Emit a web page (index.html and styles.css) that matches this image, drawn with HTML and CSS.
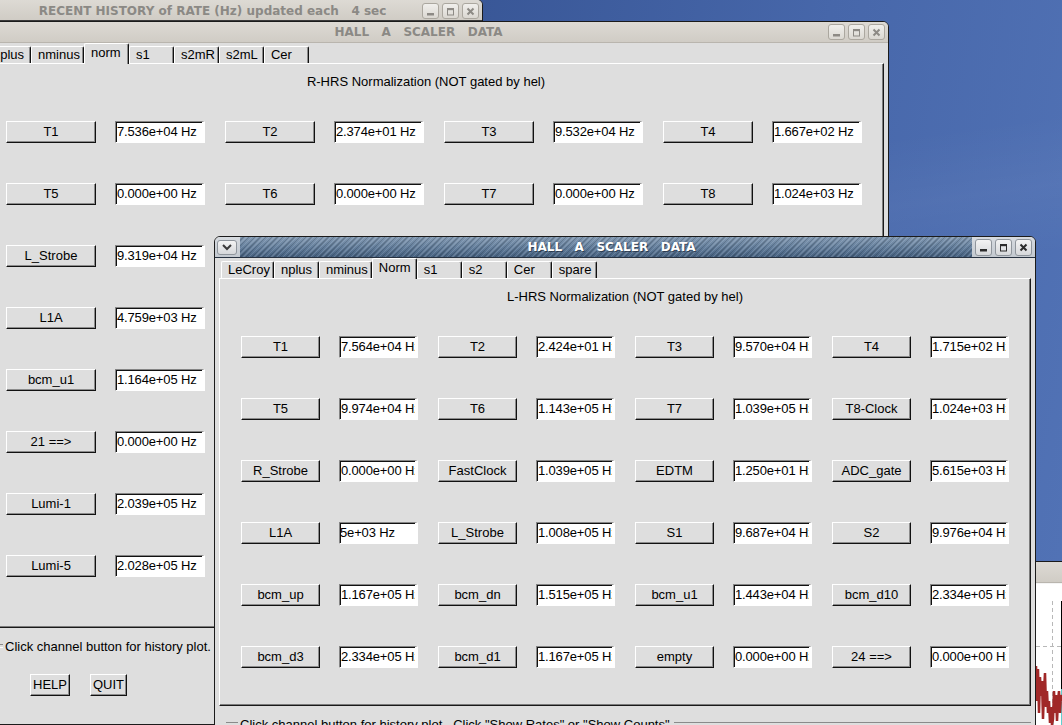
FILE: index.html
```html
<!DOCTYPE html>
<html>
<head>
<meta charset="utf-8">
<title>Hall A Scaler Data</title>
<link rel="stylesheet" href="styles.css">
</head>
<body>
<div class="desktop">

  <!-- Window A: recent history -->
  <div class="win win-a">
    <div class="titlebar">
      <div class="title">RECENT HISTORY of RATE (Hz) updated each   4 sec</div>
      <div class="wbtns">
        <span class="wbtn"><svg viewBox="0 0 11 11"><rect x="2" y="7" width="7" height="2.5" fill="currentColor"/></svg></span>
        <span class="wbtn"><svg viewBox="0 0 11 11"><rect x="2.5" y="2.5" width="6" height="6.5" fill="none" stroke="currentColor" stroke-width="1"/><rect x="2" y="2" width="7" height="2.2" fill="currentColor"/></svg></span>
        <span class="wbtn"><svg viewBox="0 0 11 11"><path d="M2.5 2.5 L8.5 8.5 M8.5 2.5 L2.5 8.5" stroke="currentColor" stroke-width="2"/></svg></span>
      </div>
    </div>
    <div class="body"></div>
  </div>

  <!-- Window B: R-HRS -->
  <div class="win win-b">
    <div class="titlebar">
      <div class="title">HALL   A   SCALER   DATA</div>
      <div class="wbtns">
        <span class="wbtn"><svg viewBox="0 0 11 11"><rect x="2" y="7" width="7" height="2.5" fill="currentColor"/></svg></span>
        <span class="wbtn"><svg viewBox="0 0 11 11"><rect x="2.5" y="2.5" width="6" height="6.5" fill="none" stroke="currentColor" stroke-width="1"/><rect x="2" y="2" width="7" height="2.2" fill="currentColor"/></svg></span>
        <span class="wbtn"><svg viewBox="0 0 11 11"><path d="M2.5 2.5 L8.5 8.5 M8.5 2.5 L2.5 8.5" stroke="currentColor" stroke-width="2"/></svg></span>
      </div>
    </div>
    <div class="body">
      <div class="tabs">
        <span class="tab">nplus</span>
        <span class="tab">nminus</span>
        <span class="tab sel">norm</span>
        <span class="tab">s1</span>
        <span class="tab">s2mR</span>
        <span class="tab">s2mL</span>
        <span class="tab">Cer</span>
      </div>
      <div class="panel">
        <div class="heading">R-HRS Normalization (NOT gated by hel)</div>
        <div class="grid">
          <div class="row">
            <div class="pair"><span class="btn">T1</span><span class="entry">7.536e+04 Hz</span></div>
            <div class="pair"><span class="btn">T2</span><span class="entry">2.374e+01 Hz</span></div>
            <div class="pair"><span class="btn">T3</span><span class="entry">9.532e+04 Hz</span></div>
            <div class="pair"><span class="btn">T4</span><span class="entry">1.667e+02 Hz</span></div>
          </div>
          <div class="row">
            <div class="pair"><span class="btn">T5</span><span class="entry">0.000e+00 Hz</span></div>
            <div class="pair"><span class="btn">T6</span><span class="entry">0.000e+00 Hz</span></div>
            <div class="pair"><span class="btn">T7</span><span class="entry">0.000e+00 Hz</span></div>
            <div class="pair"><span class="btn">T8</span><span class="entry">1.024e+03 Hz</span></div>
          </div>
          <div class="row">
            <div class="pair"><span class="btn">L_Strobe</span><span class="entry">9.319e+04 Hz</span></div>
            <div class="pair"><span class="btn">FastClock</span><span class="entry">1.039e+05 Hz</span></div>
            <div class="pair"><span class="btn">EDTM</span><span class="entry">1.250e+01 Hz</span></div>
            <div class="pair"><span class="btn">ADC_gate</span><span class="entry">5.615e+03 Hz</span></div>
          </div>
          <div class="row">
            <div class="pair"><span class="btn">L1A</span><span class="entry">4.759e+03 Hz</span></div>
            <div class="pair"><span class="btn">R_Strobe</span><span class="entry">1.008e+05 Hz</span></div>
            <div class="pair"><span class="btn">S1</span><span class="entry">9.687e+04 Hz</span></div>
            <div class="pair"><span class="btn">S2</span><span class="entry">9.976e+04 Hz</span></div>
          </div>
          <div class="row">
            <div class="pair"><span class="btn">bcm_u1</span><span class="entry">1.164e+05 Hz</span></div>
            <div class="pair"><span class="btn">bcm_d1</span><span class="entry">1.515e+05 Hz</span></div>
            <div class="pair"><span class="btn">bcm_u3</span><span class="entry">1.443e+04 Hz</span></div>
            <div class="pair"><span class="btn">bcm_d3</span><span class="entry">2.334e+05 Hz</span></div>
          </div>
          <div class="row">
            <div class="pair"><span class="btn">21 ==&gt;</span><span class="entry">0.000e+00 Hz</span></div>
            <div class="pair"><span class="btn">bcm_u10</span><span class="entry">1.167e+05 Hz</span></div>
            <div class="pair"><span class="btn">bcm_d10</span><span class="entry">2.334e+05 Hz</span></div>
            <div class="pair"><span class="btn">Lumi-0</span><span class="entry">2.041e+05 Hz</span></div>
          </div>
          <div class="row">
            <div class="pair"><span class="btn">Lumi-1</span><span class="entry">2.039e+05 Hz</span></div>
            <div class="pair"><span class="btn">Lumi-2</span><span class="entry">2.035e+05 Hz</span></div>
            <div class="pair"><span class="btn">Lumi-3</span><span class="entry">2.031e+05 Hz</span></div>
            <div class="pair"><span class="btn">Lumi-4</span><span class="entry">2.030e+05 Hz</span></div>
          </div>
          <div class="row">
            <div class="pair"><span class="btn">Lumi-5</span><span class="entry">2.028e+05 Hz</span></div>
            <div class="pair"><span class="btn">Lumi-6</span><span class="entry">2.026e+05 Hz</span></div>
            <div class="pair"><span class="btn">Lumi-7</span><span class="entry">2.025e+05 Hz</span></div>
            <div class="pair"><span class="btn">empty</span><span class="entry">0.000e+00 Hz</span></div>
          </div>
        </div>
      </div>
      <div class="lframe">
        <div class="legend"><span>Click channel button for history plot.</span></div>
        <div class="actions">
          <span class="btn abtn">HELP</span>
          <span class="btn abtn">QUIT</span>
        </div>
      </div>
    </div>
  </div>

  <!-- Window D: plot (partly hidden) -->
  <div class="win win-d">
    <div class="titlebar"></div>
    <div class="plot">
      <svg class="plotsvg" viewBox="0 0 198 180" width="198" height="180">
        <line x1="51.5" y1="17" x2="51.5" y2="180" stroke="#b8b8b8" stroke-width="1" stroke-dasharray="4 3"/>
        <line x1="0" y1="62.5" x2="198" y2="62.5" stroke="#b8b8b8" stroke-width="1" stroke-dasharray="4 3"/>
        <line x1="60.5" y1="17" x2="60.5" y2="180" stroke="#000" stroke-width="1"/>
        <line x1="51.5" y1="130" x2="51.5" y2="180" stroke="#5fd0d0" stroke-width="2"/>
        <line x1="61" y1="105" x2="61" y2="180" stroke="#5fd0d0" stroke-width="2"/>
        <polyline fill="none" stroke="#a02828" stroke-width="2.5" points="35,82 36,117 37,85 38,129 39,93 40,112 41,97 42,135 43,107 44,89 45,123 46,107 47,129 48,117 49,139 50,123 51,141 52,135 53,107 54,129 55,111 56,137 57,117 58,107 59,129 60,111 61,117"/>
      </svg>
    </div>
  </div>

  <!-- Window C: L-HRS (active) -->
  <div class="win win-c">
    <div class="titlebar active">
      <span class="menubtn"><svg viewBox="0 0 18 12"><path d="M5 4 L9 8 L13 4" fill="none" stroke="currentColor" stroke-width="2"/></svg></span>
      <div class="title">HALL   A   SCALER   DATA</div>
      <div class="wbtns">
        <span class="wbtn"><svg viewBox="0 0 11 11"><rect x="2" y="7" width="7" height="2.5" fill="currentColor"/></svg></span>
        <span class="wbtn"><svg viewBox="0 0 11 11"><rect x="2.5" y="2.5" width="6" height="6.5" fill="none" stroke="currentColor" stroke-width="1"/><rect x="2" y="2" width="7" height="2.2" fill="currentColor"/></svg></span>
        <span class="wbtn"><svg viewBox="0 0 11 11"><path d="M2.5 2.5 L8.5 8.5 M8.5 2.5 L2.5 8.5" stroke="currentColor" stroke-width="2"/></svg></span>
      </div>
    </div>
    <div class="body">
      <div class="tabs">
        <span class="tab">LeCroy</span>
        <span class="tab">nplus</span>
        <span class="tab">nminus</span>
        <span class="tab sel">Norm</span>
        <span class="tab">s1</span>
        <span class="tab">s2</span>
        <span class="tab">Cer</span>
        <span class="tab">spare</span>
      </div>
      <div class="panel">
        <div class="heading">L-HRS Normalization (NOT gated by hel)</div>
        <div class="grid">
          <div class="row">
            <div class="pair"><span class="btn">T1</span><span class="entry">7.564e+04 Hz</span></div>
            <div class="pair"><span class="btn">T2</span><span class="entry">2.424e+01 Hz</span></div>
            <div class="pair"><span class="btn">T3</span><span class="entry">9.570e+04 Hz</span></div>
            <div class="pair"><span class="btn">T4</span><span class="entry">1.715e+02 Hz</span></div>
          </div>
          <div class="row">
            <div class="pair"><span class="btn">T5</span><span class="entry">9.974e+04 Hz</span></div>
            <div class="pair"><span class="btn">T6</span><span class="entry">1.143e+05 Hz</span></div>
            <div class="pair"><span class="btn">T7</span><span class="entry">1.039e+05 Hz</span></div>
            <div class="pair"><span class="btn">T8-Clock</span><span class="entry">1.024e+03 Hz</span></div>
          </div>
          <div class="row">
            <div class="pair"><span class="btn">R_Strobe</span><span class="entry">0.000e+00 Hz</span></div>
            <div class="pair"><span class="btn">FastClock</span><span class="entry">1.039e+05 Hz</span></div>
            <div class="pair"><span class="btn">EDTM</span><span class="entry">1.250e+01 Hz</span></div>
            <div class="pair"><span class="btn">ADC_gate</span><span class="entry">5.615e+03 Hz</span></div>
          </div>
          <div class="row">
            <div class="pair"><span class="btn">L1A</span><span class="entry scrolled">5e+03 Hz</span></div>
            <div class="pair"><span class="btn">L_Strobe</span><span class="entry">1.008e+05 Hz</span></div>
            <div class="pair"><span class="btn">S1</span><span class="entry">9.687e+04 Hz</span></div>
            <div class="pair"><span class="btn">S2</span><span class="entry">9.976e+04 Hz</span></div>
          </div>
          <div class="row">
            <div class="pair"><span class="btn">bcm_up</span><span class="entry">1.167e+05 Hz</span></div>
            <div class="pair"><span class="btn">bcm_dn</span><span class="entry">1.515e+05 Hz</span></div>
            <div class="pair"><span class="btn">bcm_u1</span><span class="entry">1.443e+04 Hz</span></div>
            <div class="pair"><span class="btn">bcm_d10</span><span class="entry">2.334e+05 Hz</span></div>
          </div>
          <div class="row">
            <div class="pair"><span class="btn">bcm_d3</span><span class="entry">2.334e+05 Hz</span></div>
            <div class="pair"><span class="btn">bcm_d1</span><span class="entry">1.167e+05 Hz</span></div>
            <div class="pair"><span class="btn">empty</span><span class="entry">0.000e+00 Hz</span></div>
            <div class="pair"><span class="btn">24 ==&gt;</span><span class="entry">0.000e+00 Hz</span></div>
          </div>
        </div>
      </div>
      <div class="lframe">
        <div class="legend"><span>Click channel button for history plot.  Click "Show Rates" or "Show Counts"</span></div>
      </div>
    </div>
  </div>

</div>
</body>
</html>
```

FILE: styles.css
```css
* { box-sizing: border-box; }

body {
  margin: 0;
  background: #3d5b9b;
  font-family: "Liberation Sans", Arial, sans-serif;
  font-size: 13px;
  color: #000;
}

.desktop {
  position: relative;
  width: 1062px;
  height: 725px;
  overflow: hidden;
  background:
    linear-gradient(172deg, rgba(255,255,255,0) 30%, rgba(255,255,255,0.04) 38%, rgba(255,255,255,0) 46%),
    linear-gradient(100deg, #2f4b88 0%, #395797 40%, #4767aa 70%, #5273b6 100%);
}

/* ---------- windows ---------- */
.win {
  position: absolute;
  border: 1px solid #1b1b1b;
  border-radius: 6px 6px 0 0;
  background: #dedede;
  display: flex;
  flex-direction: column;
  overflow: hidden;
}

.win-a { left: -21px; top: -1px; width: 504px; height: 300px; }
.win-b { left: -21px; top: 21px; width: 910px; height: 704px; }
.win-c { left: 214px; top: 236px; width: 822px; height: 520px; }
.win-d { left: 1000px; top: 561px; width: 200px; height: 200px; }

.titlebar {
  flex: none;
  height: 21px;
  display: flex;
  align-items: center;
  background: linear-gradient(#dddad4, #d0ccc5);
  border-bottom: 1px solid #b9b5ae;
}

.win-a .titlebar {
  border-bottom-color: #3a3a3a;
  padding-top: 2px;
}

.title {
  flex: 1;
  text-align: center;
  font-family: "DejaVu Sans", sans-serif;
  font-weight: bold;
  font-size: 12px;
  color: #8b8985;
  white-space: pre;
  overflow: hidden;
}

.win-a .title { padding-left: 26px; }
.win-b .title { padding-left: 32px; }

.wbtns {
  display: flex;
  gap: 3px;
  padding: 0 3px;
}

.wbtn {
  width: 17px;
  height: 16px;
  border: 1px solid #aba79f;
  border-radius: 3px;
  background: linear-gradient(#f0efec, #dbd8d2);
  color: #8d8a85;
  display: flex;
  align-items: center;
  justify-content: center;
}

.wbtn svg { width: 11px; height: 11px; }

/* active title bar */
.titlebar.active {
  background: linear-gradient(#d7dbe0, #c3c9d0);
  border-bottom: 1px solid #263140;
}

.titlebar.active .title {
  align-self: stretch;
  display: flex;
  align-items: center;
  justify-content: center;
  padding-left: 11px;
  color: #fff;
  text-shadow: 1px 1px 0 rgba(20, 30, 45, 0.6);
  background:
    repeating-linear-gradient(135deg, rgba(255,255,255,0.14) 0 1px, rgba(255,255,255,0) 1px 2px, rgba(0,0,0,0.16) 2px 3px, rgba(0,0,0,0) 3px 4px),
    linear-gradient(#8299b2, #617c9a 55%, #45607f);
}

.titlebar.active .wbtn {
  height: 17px;
  color: #2c2c2c;
  border-color: #8f959c;
  background: linear-gradient(#f3f3f3, #d6d8db);
}

.menubtn {
  flex: none;
  width: 20px;
  height: 15px;
  margin: 0 3px 0 2px;
  border: 1px solid #8f959c;
  border-radius: 3px;
  background: linear-gradient(#f3f3f3, #d6d8db);
  color: #3a3a3a;
  display: flex;
  align-items: center;
  justify-content: center;
}

.menubtn svg { width: 18px; height: 12px; }

/* ---------- body ---------- */
.body {
  flex: 1;
  padding: 0 4px;
  display: flex;
  flex-direction: column;
}

.tabs {
  flex: none;
  height: 20px;
  display: flex;
  align-items: flex-end;
  padding-left: 2px;
  position: relative;
  z-index: 1;
}

.tab {
  height: 17px;
  min-width: 45px;
  padding: 0 3px 0 6px;
  line-height: 16px;
  border-top: 1px solid #fff;
  border-left: 1px solid #fff;
  border-right: 1px solid #111;
  box-shadow: inset -1px 0 0 #8a8a8a;
  border-radius: 2px 2px 0 0;
  background: #dedede;
  white-space: nowrap;
}

.tab.sel {
  height: 21px;
  margin-bottom: -1px;
  line-height: 18px;
}

.panel {
  flex: none;
  border-top: 1px solid #fff;
  border-left: 1px solid #fff;
  border-right: 1px solid #1a1a1a;
  border-bottom: 1px solid #1a1a1a;
  box-shadow: inset -1px -1px 0 #7c7c7c;
  padding-top: 9px;
}

.win-b .panel { height: 565px; }
.win-c .panel { height: 428px; }

.heading {
  height: 18px;
  line-height: 18px;
  text-align: center;
  margin-bottom: 30px;
  white-space: nowrap;
}

.win-b .heading { padding-right: 16px; }

.grid {
  margin-left: 21px;
  display: flex;
  flex-direction: column;
  gap: 40px;
}

.row { display: flex; gap: 20px; }
.pair { display: flex; gap: 19px; }

.btn {
  height: 22px;
  line-height: 20px;
  text-align: center;
  white-space: nowrap;
  background: #dedede;
  border: 1px solid;
  border-color: #fff #111 #111 #fff;
  box-shadow: inset -1px -1px 0 #8c8c8c;
}

.entry {
  height: 22px;
  line-height: 20px;
  padding-left: 1px;
  letter-spacing: -0.15px;
  white-space: nowrap;
  overflow: hidden;
  background: #fff;
  border-style: solid;
  border-width: 1px 3px 1px 1px;
  border-color: #858585 #fff #fff #858585;
  box-shadow: inset 1px 1px 0 #111;
}

.entry.scrolled { padding-left: 0; }

.win-b .btn, .win-b .entry { width: 90px; }
.win-c .btn, .win-c .entry { width: 79px; }

/* ---------- label frame ---------- */
.lframe {
  flex: none;
  margin-left: 7px;
}

.legend {
  margin-top: 10px;
  height: 16px;
  display: flex;
  align-items: center;
  white-space: pre;
}

.legend::before,
.legend::after {
  content: "";
  height: 2px;
  border-top: 1px solid #8a8a8a;
  border-bottom: 1px solid #fff;
}

.legend::before { flex: none; width: 12px; margin-right: 2px; }
.legend::after { flex: 1; margin-left: 4px; }

.actions {
  display: flex;
  gap: 20px;
  padding: 20px 0 0 39px;
}

.win-b .abtn { width: auto; padding: 0 2px; }

/* ---------- plot window ---------- */
.plot {
  flex: 1;
  background: #fff;
  border-top: 1px solid #f4f4f4;
}

.plotsvg { display: block; }
```
